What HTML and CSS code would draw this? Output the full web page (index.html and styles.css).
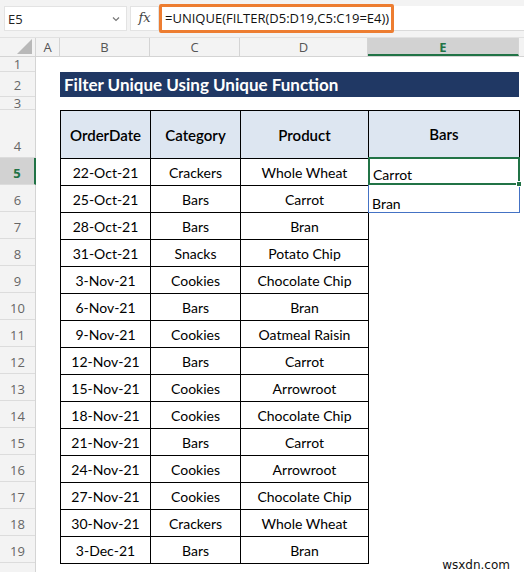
FILE: index.html
```html
<!DOCTYPE html>
<html lang="en">
<head>
    <meta charset="UTF-8">
    <meta name="viewport" content="width=device-width, initial-scale=1.0">
    <title>Filter Unique Using Unique Function</title>
    <link rel="stylesheet" href="styles.css">
</head>
<body>
    <div class="app">
        <!-- name box + formula bar -->
        <div class="formula-bar">
            <div class="name-box">
                <span>E5</span>
                <svg class="chev" width="8" height="6" viewBox="0 0 8 6"><polyline points="1,1.5 4,4.5 7,1.5" fill="none" stroke="#777" stroke-width="1.2"/></svg>
            </div>
            <div class="fx">fx</div>
            <div class="formula">=UNIQUE(FILTER(D5:D19,C5:C19=E4))</div>
            <div class="formula-rest"></div>
        </div>

        <!-- column letters -->
        <div class="col-heads">
            <div class="corner"><span class="tri"></span></div>
            <div class="ch col-a">A</div>
            <div class="ch col-b">B</div>
            <div class="ch col-c">C</div>
            <div class="ch col-d">D</div>
            <div class="ch col-e active">E</div>
            <div class="ch col-f"></div>
        </div>

        <div class="grid-body">
            <div class="row-heads">
                <div class="rh r-1">1</div>
                <div class="rh r-2">2</div>
                <div class="rh r-3">3</div>
                <div class="rh r-4">4</div>
                <div class="rh r-n active">5</div>
                <div class="rh r-n">6</div>
                <div class="rh r-n">7</div>
                <div class="rh r-n">8</div>
                <div class="rh r-n">9</div>
                <div class="rh r-n">10</div>
                <div class="rh r-n">11</div>
                <div class="rh r-n">12</div>
                <div class="rh r-n">13</div>
                <div class="rh r-n">14</div>
                <div class="rh r-n">15</div>
                <div class="rh r-n">16</div>
                <div class="rh r-n">17</div>
                <div class="rh r-n">18</div>
                <div class="rh r-n">19</div>
                <div class="rh r-n"></div>
            </div>

            <div class="sheet">
                <div class="gap-1"></div>
                <div class="title">Filter Unique Using Unique Function</div>
                <div class="gap-3"></div>

                <div class="data-area">
                    <table class="orders">
                        <thead>
                            <tr>
                                <th class="w-b">OrderDate</th>
                                <th class="w-c">Category</th>
                                <th class="w-d">Product</th>
                            </tr>
                        </thead>
                        <tbody>
                            <tr><td>22-Oct-21</td><td>Crackers</td><td>Whole Wheat</td></tr>
                            <tr><td>25-Oct-21</td><td>Bars</td><td>Carrot</td></tr>
                            <tr><td>28-Oct-21</td><td>Bars</td><td>Bran</td></tr>
                            <tr><td>31-Oct-21</td><td>Snacks</td><td>Potato Chip</td></tr>
                            <tr><td>3-Nov-21</td><td>Cookies</td><td>Chocolate Chip</td></tr>
                            <tr><td>6-Nov-21</td><td>Bars</td><td>Bran</td></tr>
                            <tr><td>9-Nov-21</td><td>Cookies</td><td>Oatmeal Raisin</td></tr>
                            <tr><td>12-Nov-21</td><td>Bars</td><td>Carrot</td></tr>
                            <tr><td>15-Nov-21</td><td>Cookies</td><td>Arrowroot</td></tr>
                            <tr><td>18-Nov-21</td><td>Cookies</td><td>Chocolate Chip</td></tr>
                            <tr><td>21-Nov-21</td><td>Bars</td><td>Carrot</td></tr>
                            <tr><td>24-Nov-21</td><td>Cookies</td><td>Arrowroot</td></tr>
                            <tr><td>27-Nov-21</td><td>Cookies</td><td>Chocolate Chip</td></tr>
                            <tr><td>30-Nov-21</td><td>Crackers</td><td>Whole Wheat</td></tr>
                            <tr><td>3-Dec-21</td><td>Bars</td><td>Bran</td></tr>
                        </tbody>
                    </table>

                    <div class="result">
                        <div class="result-head">Bars</div>
                        <div class="spill">
                            <div class="cell selected">Carrot<span class="handle"></span></div>
                            <div class="cell">Bran</div>
                        </div>
                    </div>
                </div>
            </div>
        </div>

        <div class="watermark">wsxdn.com</div>
    </div>
</body>
</html>
```

FILE: styles.css
```css
* {
    margin: 0;
    padding: 0;
    box-sizing: border-box;
}
body {
    font-family: 'Lato', 'Open Sans', sans-serif;
    background: #fff;
    color: #000;
    width: 524px;
    height: 572px;
    overflow: hidden;
}
.app {
    position: relative;
    width: 524px;
    height: 572px;
    overflow: hidden;
}

/* formula bar */
.formula-bar {
    display: flex;
    align-items: center;
    height: 38px;
    background: #f3f3f3;
    padding-left: 4px;
    border-bottom: 1px solid #e1e1e1;
}
.name-box {
    display: flex;
    align-items: center;
    justify-content: space-between;
    width: 123px;
    height: 25px;
    background: #fff;
    border: 1px solid #e3e3e3;
    padding: 0 6px 0 3px;
    font-family: 'Open Sans', sans-serif;
    font-size: 13px;
    color: #222;
}
.fx {
    width: 29px;
    height: 25px;
    margin-left: 3px;
    background: #fff;
    border: 1px solid #e3e3e3;
    font-family: 'DejaVu Serif', serif;
    font-style: italic;
    font-size: 13px;
    color: #444;
    text-align: center;
    line-height: 22px;
}
.formula {
    width: 235px;
    height: 29px;
    border: 3px solid #ed7d31;
    border-radius: 2px;
    background: #fff;
    font-family: 'Open Sans', sans-serif;
    font-size: 13px;
    color: #111;
    line-height: 22px;
    padding-left: 3px;
    white-space: nowrap;
    overflow: hidden;
}
.formula-rest {
    flex: 1;
    height: 25px;
    background: #fff;
    border-bottom: 1px solid #dadada;
}

/* column letters */
.col-heads {
    display: flex;
    height: 19px;
    background: #f3f3f3;
    border-bottom: 1px solid #d4d4d4;
    font-family: 'Open Sans', sans-serif;
    font-size: 13px;
    color: #555;
}
.corner {
    position: relative;
    width: 36px;
    border-right: 1px solid #d4d4d4;
}
.tri {
    position: absolute;
    right: 3px;
    bottom: 2px;
    width: 0;
    height: 0;
    border-left: 15px solid transparent;
    border-bottom: 15px solid #b8b8b8;
}
.ch {
    text-align: center;
    line-height: 18px;
    border-right: 1px solid #d4d4d4;
}
.col-a { width: 24px; }
.col-b { width: 90px; }
.col-c { width: 90px; }
.col-d { width: 128px; }
.col-e { width: 151px; }
.col-f { flex: 1; border-right: none; }
.ch.active {
    background: #d2d2d2;
    color: #217346;
    font-weight: bold;
    border-bottom: 2px solid #217346;
}

/* row numbers */
.grid-body {
    display: flex;
}
.row-heads {
    width: 36px;
    background: #f3f3f3;
    border-right: 1px solid #d4d4d4;
    font-family: 'Open Sans', sans-serif;
    font-size: 13px;
    color: #666;
}
.rh {
    display: flex;
    align-items: flex-end;
    justify-content: center;
    border-bottom: 1px solid #dcdcdc;
    padding-bottom: 3px;
    overflow: hidden;
    line-height: 16px;
}
.r-1 { height: 15px; padding-bottom: 0; line-height: 14px; align-items: center; }
.r-2 { height: 25px; }
.r-3 { height: 13px; padding-bottom: 0; align-items: flex-start; line-height: 13px; }
.r-4 { height: 48px; }
.r-n { height: 27px; }
.rh.active {
    background: #d2d2d2;
    color: #217346;
    font-weight: bold;
    border-right: 2px solid #217346;
    margin-right: -1px;
}

/* sheet content */
.sheet {
    padding-left: 24px;
}
.gap-1 { height: 15px; }
.gap-3 { height: 13px; }
.title {
    width: 459px;
    height: 25px;
    background: #203864;
    color: #fff;
    font-weight: bold;
    font-size: 17px;
    line-height: 25px;
    padding-left: 4px;
    white-space: nowrap;
}
.data-area {
    display: flex;
    align-items: flex-start;
}
.orders {
    border-collapse: collapse;
    font-size: 14px;
    text-align: center;
}
.orders th,
.orders td {
    border: 1px solid #000;
    padding: 0;
}
.orders th {
    height: 48px;
    background: #dde6f1;
    font-size: 15px;
    font-weight: 600;
}
.orders td {
    height: 27px;
}
.w-b { width: 90px; }
.w-c { width: 90px; }
.w-d { width: 128px; }

.result {
    width: 151px;
    font-size: 14px;
}
.result-head {
    height: 48px;
    background: #dde6f1;
    border-top: 1px solid #000;
    border-right: 1px solid #000;
    border-bottom: 1px solid #000;
    text-align: center;
    line-height: 46px;
    font-size: 15px;
    font-weight: 600;
}
.spill {
    border: 1px solid #4472c4;
    border-top: none;
    margin-left: -1px;
}
.cell {
    position: relative;
    height: 27px;
    display: flex;
    align-items: flex-end;
    padding: 0 0 0 3px;
    line-height: 17px;
}
.cell.selected {
    height: 28px;
    margin: -1px -1px 0 -1px;
    border: 2px solid #217346;
    padding-left: 3px;
}
.handle {
    position: absolute;
    right: -4px;
    bottom: -4px;
    width: 6px;
    height: 6px;
    background: #217346;
    border: 1px solid #fff;
}

.watermark {
    position: absolute;
    right: 12px;
    bottom: 0;
    font-family: 'DejaVu Sans', sans-serif;
    font-size: 12px;
    color: #111;
    background: #fff;
    padding: 0 2px;
}
```
